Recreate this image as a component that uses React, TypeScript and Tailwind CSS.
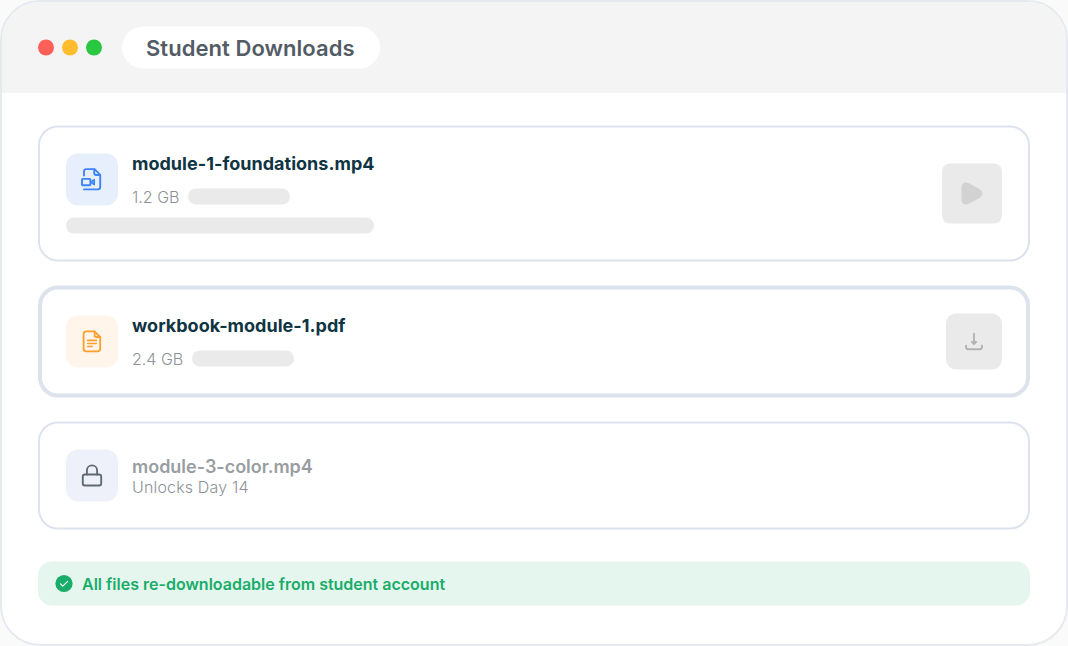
import type { ReactNode } from "react";

function FileVideoIcon() {
  return (
    <svg width="26" height="26" viewBox="0 0 26 26" fill="none" stroke="#3f83f8" strokeWidth="1.9" strokeLinecap="round" strokeLinejoin="round">
      <path d="M5 9V4.8C5 3.4 5.9 2.6 7.3 2.6H15.6L21.2 8.3V20.6C21.2 22.1 20.4 22.9 18.9 22.9H5" />
      <path d="M15.2 3V6.4C15.2 7.8 16 8.5 17.2 8.5H20.8" />
      <rect x="3" y="12.4" width="8.4" height="6.4" rx="0.8" />
      <path d="M12 15.6L15.2 13.2V18L12 15.6Z" strokeWidth="1.7" />
    </svg>
  );
}

function FileTextIcon() {
  return (
    <svg width="26" height="26" viewBox="0 0 26 26" fill="none" stroke="#ff9f2e" strokeWidth="1.8" strokeLinecap="round" strokeLinejoin="round">
      <path d="M7.2 2.8H15.4L21.2 8.5V20C21.2 21.9 20.4 22.9 18.3 22.9H7.2C5.3 22.9 4.6 21.9 4.6 20V5.7C4.6 3.8 5.3 2.8 7.2 2.8Z" />
      <path d="M15.6 2.8V6.8C15.6 7.9 16.2 8.5 17.3 8.5H21.1" />
      <path d="M8.7 11.9H17.3M8.7 15H17.3M8.7 18H13.4" strokeWidth="1.6" />
    </svg>
  );
}

function LockIcon() {
  return (
    <svg width="26" height="26" viewBox="0 0 26 26" fill="none" stroke="#606a73" strokeWidth="1.9" strokeLinecap="round" strokeLinejoin="round">
      <rect x="3.8" y="12" width="18.4" height="11" rx="2" />
      <path d="M7.9 12V7.9C7.9 5 10.1 2.9 13 2.9S18.1 5 18.1 7.9V12" />
    </svg>
  );
}

function PlayIcon() {
  return (
    <svg width="24" height="24" viewBox="0 0 24 24" fill="#d2d2d2">
      <path d="M1.5 6.5C1.5 1.6 4.8 -.1 9 1.8L18.6 7.1C23.8 10.5 23.8 13.8 18.6 16.9L9 22.3C4.8 24.3 1.5 22.4 1.5 17.5Z" />
    </svg>
  );
}

function DownloadIcon() {
  return (
    <svg width="24" height="24" viewBox="0 0 24 24" fill="none" stroke="#b2b2b2" strokeWidth="1.9" strokeLinecap="round" strokeLinejoin="round">
      <path d="M4 16.2V17.3C4 18.7 4.8 19.7 6.2 19.7H17.8C19.2 19.7 20 18.7 20 17.3V16.2M12 4.2V12" />
      <path d="M9.9 12.4H14.1L12 14.6Z" fill="#b2b2b2" />
    </svg>
  );
}

function CheckBadge() {
  return (
    <svg width="18" height="18" viewBox="0 0 18 18" fill="none">
      <circle cx="9" cy="9" r="8.6" fill="#19ad69" />
      <path d="M5.4 9.3L7.8 11.6L12.6 6.8" stroke="white" strokeWidth="1.1" strokeLinecap="round" strokeLinejoin="round" />
    </svg>
  );
}

function IconTile({ className, children }: { className: string; children: ReactNode }) {
  return <div className={`flex size-[52px] shrink-0 items-center justify-center rounded-xl ${className}`}>{children}</div>;
}

function FileMeta({ name, size }: { name: string; size: string }) {
  return (
    <div className="flex h-[52px] flex-col justify-center">
      <h2 className="text-[18px] leading-[22px] font-bold tracking-[0.02px] text-[#0f3442]">{name}</h2>
      <div className="mt-3 flex h-5 shrink-0 items-center gap-[9px]">
        <span className="text-[16px] leading-5 font-light text-[#8d9297]">{size}</span>
        <span className="h-4 w-[102px] rounded-full bg-[#eaeaea]" />
      </div>
    </div>
  );
}

export default function App() {
  return (
    <div className="h-[646px] w-[1068px] bg-[#fafafa] font-['Inter',sans-serif]">
      <main className="flex h-full flex-col overflow-hidden rounded-[40px] border-2 border-[#e6eaf0] bg-white">
        <header className="flex h-[91px] shrink-0 bg-[#f4f4f4] pl-9">
          <div className="flex -translate-y-[0.5px] items-center">
            <div className="flex gap-2">
              <span className="size-4 rounded-full bg-[#ff5f57]" />
              <span className="size-4 rounded-full bg-[#febc2e]" />
              <span className="size-4 rounded-full bg-[#28c840]" />
            </div>
            <h1 className="ml-5 flex h-[42px] w-[258px] items-center rounded-full bg-white pl-6 text-[22px] leading-7 font-semibold tracking-[0.05px] text-[#535c65]">
              Student Downloads
            </h1>
          </div>
        </header>

        <div className="flex -translate-y-[0.5px] flex-col gap-6 px-9 pt-[33px]">
          <section className="flex h-[136px] items-center justify-between rounded-[20px] border-2 border-[#dce3ee] px-[26px]">
            <div className="flex flex-col gap-3">
              <div className="flex items-center gap-3.5">
                <IconTile className="bg-[#e7effd]"><FileVideoIcon /></IconTile>
                <FileMeta name="module-1-foundations.mp4" size="1.2 GB" />
              </div>
              <span className="h-4 w-[308px] rounded-full bg-[#eaeaea]" />
            </div>
            <button aria-label="Play" className="flex size-[60px] items-center justify-center rounded-lg bg-[#eaeaea]"><PlayIcon /></button>
          </section>

          <section className="flex h-[112px] items-center justify-between rounded-[20px] border-4 border-[#dce3ed] px-6">
            <div className="flex items-center gap-3.5">
              <IconTile className="bg-[#fff5eb]"><FileTextIcon /></IconTile>
              <FileMeta name="workbook-module-1.pdf" size="2.4 GB" />
            </div>
            <button aria-label="Download" className="flex size-14 items-center justify-center rounded-[10px] bg-[#eaeaea]"><DownloadIcon /></button>
          </section>

          <section className="flex h-[108px] items-center rounded-[20px] border-2 border-[#dce3ee] px-[26px]">
            <div className="flex items-center gap-3.5">
              <IconTile className="bg-[#eef1f9]"><LockIcon /></IconTile>
              <div>
                <h2 className="text-[18px] leading-[22px] font-semibold tracking-[-0.02px] text-[#989da1]">module-3-color.mp4</h2>
                <p className="text-[16px] leading-[18px] font-light tracking-[0.16px] text-[#8d9297]">Unlocks Day 14</p>
              </div>
            </div>
          </section>

          <footer className="mt-2 flex h-11 items-center gap-[9px] rounded-[14px] bg-[#e5f6ee] pl-[17px]">
            <CheckBadge />
            <p className="text-[16px] leading-5 font-semibold text-[#19ad69]">All files re-downloadable from student account</p>
          </footer>
        </div>
      </main>
    </div>
  );
}
